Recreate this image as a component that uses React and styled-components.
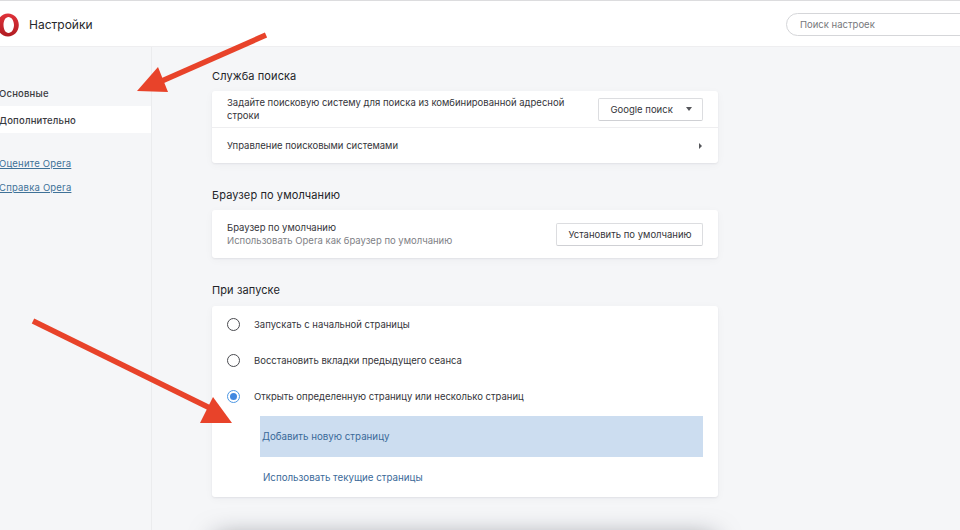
import styled, { createGlobalStyle } from 'styled-components';

const GlobalStyle = createGlobalStyle`
  html, body {
    margin: 0;
    padding: 0;
    height: 530px;
    overflow: hidden;
    background: #f5f6f8;
    font-family: Inter, "Liberation Sans", sans-serif;
    color: #2b2c30;
  }
`;

const Page = styled.div`
  position: relative;
  width: 960px;
  height: 530px;
  overflow: hidden;
  display: flex;
  flex-direction: column;
`;

const Header = styled.header`
  flex: none;
  height: 43px;
  padding-top: 2px;
  display: flex;
  align-items: center;
  background: #fff;
  border-top: 1px solid #dcdcde;
  border-bottom: 1px solid #eeeef0;
`;

const Logo = styled.svg`
  width: 22px;
  height: 24px;
  margin-left: -3px;
  flex: none;
`;

const Title = styled.h1`
  margin: 0 0 0 10px;
  font-size: 12px;
  font-weight: 400;
  color: #26272b;
`;

const Search = styled.input`
  margin-left: auto;
  margin-right: -40px;
  width: 214px;
  height: 23px;
  box-sizing: border-box;
  padding: 0 13px;
  border: 1px solid #d5d6d9;
  border-radius: 12px;
  background: #fff;
  font: 400 9.5px Inter, "Liberation Sans", sans-serif;
  outline: none;
  &::placeholder { color: #77787c; opacity: 1; }
`;

const Body = styled.div`
  flex: 1;
  display: flex;
  min-height: 0;
`;

const Sidebar = styled.nav`
  flex: none;
  width: 152px;
  box-sizing: border-box;
  padding-top: 32px;
  border-right: 1px solid #ebecee;
  display: flex;
  flex-direction: column;
`;

const NavItem = styled.div`
  height: 27px;
  box-sizing: border-box;
  padding-top: 2px;
  display: flex;
  align-items: center;
  margin-left: -1px;
  font-size: 9.5px;
  font-weight: 500;
  letter-spacing: 0.2px;
  color: #3a3b3f;
  background: ${(p) => (p.$active ? '#fff' : 'transparent')};
`;

const SideLinks = styled.div`
  margin-top: 25px;
  display: flex;
  flex-direction: column;
  gap: 12px;
`;

const SideLink = styled.a`
  margin-left: -1px;
  font-size: 9.5px;
  line-height: 12px;
  letter-spacing: 0.2px;
  color: #3f7298;
  text-decoration: underline;
`;

const Main = styled.main`
  flex: none;
  width: 506px;
  margin-left: 60px;
  padding-top: 22px;
`;

const SectionTitle = styled.h2`
  margin: 0 0 ${(p) => p.$below ?? 7}px;
  height: 15px;
  font-size: 11px;
  line-height: 15px;
  font-weight: 400;
  letter-spacing: 0.1px;
  color: #232428;
`;

const Card = styled.section`
  background: #fff;
  border-radius: 3px;
  box-shadow: 0 1px 2px rgba(30, 35, 50, 0.07), 0 2px 10px rgba(30, 35, 50, 0.035);
  margin-bottom: ${(p) => p.$gap ?? 25}px;
`;

const NextCard = styled.section`
  height: 60px;
  margin-top: 39px;
  background: #fff;
  box-shadow: 0 -2px 26px -4px rgba(20, 25, 40, 0.5);
`;

const Row = styled.div`
  height: ${(p) => p.$h || 36}px;
  box-sizing: border-box;
  padding: 0 15px;
  display: flex;
  align-items: center;
  justify-content: space-between;
  border-top: ${(p) => (p.$divided ? '1px solid #eeeef0' : 'none')};
`;

const Label = styled.div`
  font-size: 9.5px;
  line-height: 13px;
  color: #34353a;
  max-width: ${(p) => p.$max || 'none'};
`;

const Sub = styled.div`
  color: #808186;
`;

const Button = styled.button`
  height: 23px;
  width: ${(p) => p.$w}px;
  box-sizing: border-box;
  padding: 0 10px 0 11.5px;
  display: flex;
  align-items: center;
  justify-content: space-between;
  white-space: nowrap;
  background: #fff;
  border: 1px solid #dcdde0;
  border-bottom-color: #cfd0d4;
  border-radius: 2px;
  font: 400 9.5px Inter, "Liberation Sans", sans-serif;
  color: #34353a;
`;

const Caret = styled.span`
  width: 0;
  height: 0;
  border-left: 3.5px solid transparent;
  border-right: 3.5px solid transparent;
  border-top: 4px solid #55565a;
`;

const Chevron = styled.span`
  width: 0;
  height: 0;
  border-top: 3px solid transparent;
  border-bottom: 3px solid transparent;
  border-left: 3px solid #55565a;
  margin-right: 1px;
`;

const RadioList = styled.div`
  padding-bottom: 2px;
`;

const RadioRow = styled.div`
  height: 36px;
  padding-left: 15px;
  display: flex;
  align-items: center;
  gap: 14px;
`;

const Radio = styled.span`
  width: 13px;
  height: 13px;
  box-sizing: border-box;
  border-radius: 50%;
  border: 1.5px solid ${(p) => (p.$on ? '#4c97e4' : '#4a4b50')};
  display: flex;
  align-items: center;
  justify-content: center;
  &::after {
    content: '';
    display: ${(p) => (p.$on ? 'block' : 'none')};
    width: 7px;
    height: 7px;
    border-radius: 50%;
    background: #4188e0;
  }
`;

const Action = styled.div`
  height: ${(p) => p.$h}px;
  margin-left: 48px;
  margin-right: 15px;
  display: flex;
  align-items: center;
  padding-left: ${(p) => p.$pad}px;
  font-size: 9.75px;
  color: #3b6a99;
  background: ${(p) => (p.$hl ? '#ccddf0' : 'transparent')};
`;

const Overlay = styled.svg`
  position: absolute;
  left: 0;
  top: 0;
  width: 960px;
  height: 530px;
  pointer-events: none;
`;

export default function App() {
  return (
    <Page>
      <GlobalStyle />
      <Header>
        <Logo viewBox="0 0 22 24">
          <defs>
            <linearGradient id="opera" x1="0" y1="0" x2="0" y2="1">
              <stop offset="0" stopColor="#e0323a" />
              <stop offset="1" stopColor="#b01c22" />
            </linearGradient>
          </defs>
          <path
            fillRule="evenodd"
            fill="url(#opera)"
            d="M11 0.5C17 0.5 21.8 5.6 21.8 12S17 23.5 11 23.5S0.2 18.4 0.2 12S5 0.5 11 0.5ZM11.5 4C8.6 4 6.5 7.6 6.5 12S8.6 20 11.5 20S17 16.4 17 12S14.4 4 11.5 4Z"
          />
        </Logo>
        <Title>Настройки</Title>
        <Search placeholder="Поиск настроек" readOnly />
      </Header>
      <Body>
        <Sidebar>
          <NavItem>Основные</NavItem>
          <NavItem $active>Дополнительно</NavItem>
          <SideLinks>
            <SideLink>Оцените Opera</SideLink>
            <SideLink>Справка Opera</SideLink>
          </SideLinks>
        </Sidebar>
        <Main>
          <SectionTitle>Служба поиска</SectionTitle>
          <Card>
            <Row>
              <Label $max="350px">Задайте поисковую систему для поиска из комбинированной адресной строки</Label>
              <Button $w={105}>
                Google поиск
                <Caret />
              </Button>
            </Row>
            <Row $divided>
              <Label>Управление поисковыми системами</Label>
              <Chevron />
            </Row>
          </Card>
          <SectionTitle>Браузер по умолчанию</SectionTitle>
          <Card>
            <Row $h={48}>
              <Label>
                Браузер по умолчанию
                <Sub>Использовать Opera как браузер по умолчанию</Sub>
              </Label>
              <Button $w={147}>Установить по умолчанию</Button>
            </Row>
          </Card>
          <SectionTitle $below={8}>При запуске</SectionTitle>
          <Card $gap={0}>
            <RadioList>
              <RadioRow>
                <Radio />
                <Label>Запускать с начальной страницы</Label>
              </RadioRow>
              <RadioRow>
                <Radio />
                <Label>Восстановить вкладки предыдущего сеанса</Label>
              </RadioRow>
              <RadioRow>
                <Radio $on />
                <Label>Открыть определенную страницу или несколько страниц</Label>
              </RadioRow>
            </RadioList>
            <Action $hl $h={41} $pad={2}>Добавить новую страницу</Action>
            <Action $h={40} $pad={3}>Использовать текущие страницы</Action>
          </Card>
          <NextCard />
        </Main>
      </Body>
      <Overlay viewBox="0 0 960 530">
        <path d="M266 35L155 84" stroke="#e8432a" strokeWidth="5.5" fill="none" />
        <path d="M158 67L137 91L168 92Z" fill="#e8432a" />
        <path d="M33 321L218 412" stroke="#e8432a" strokeWidth="5.5" fill="none" />
        <path d="M213 397L200 423L232 423Z" fill="#e8432a" />
      </Overlay>
    </Page>
  );
}
